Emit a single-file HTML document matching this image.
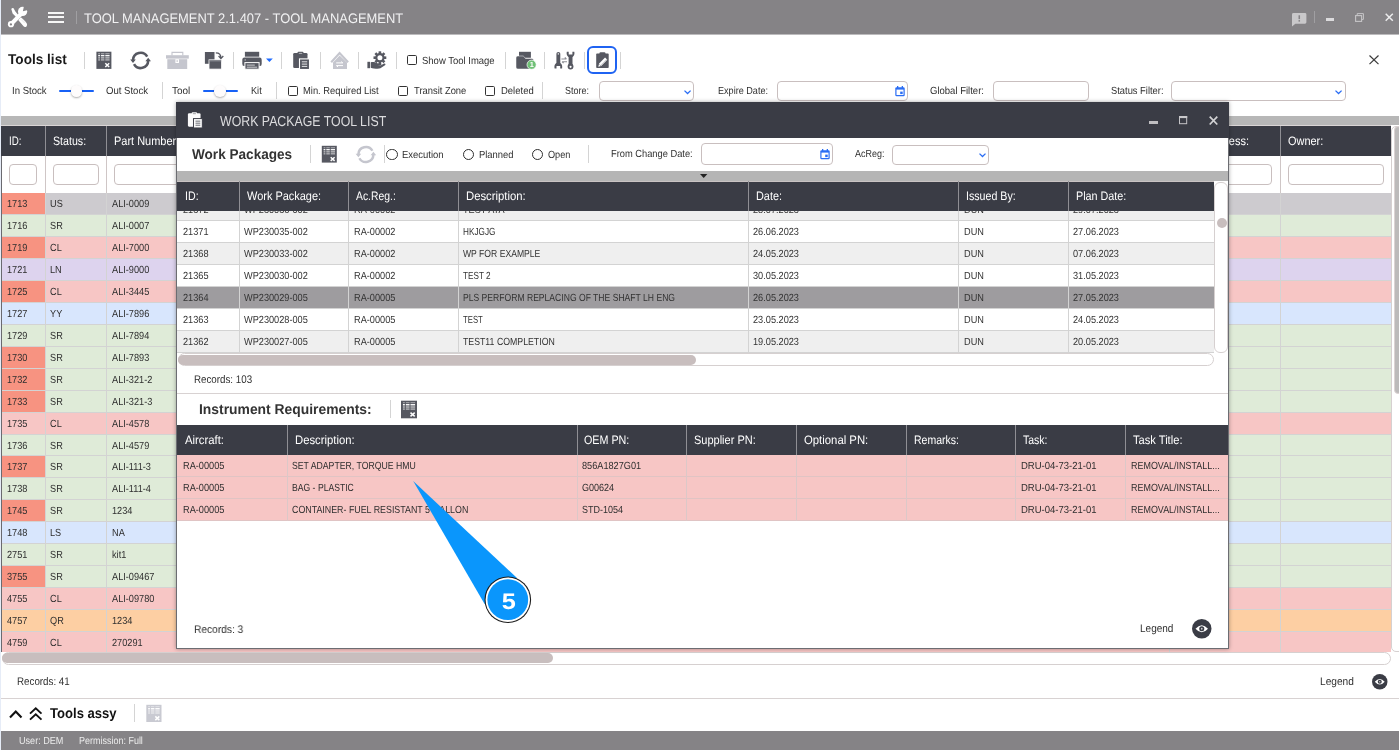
<!DOCTYPE html><html><head><meta charset="utf-8"><title>Tool Management</title><style>
*{box-sizing:border-box;margin:0;padding:0}
html,body{width:1399px;height:750px;overflow:hidden;background:#fff;font-family:"Liberation Sans",sans-serif;color:#222;text-rendering:geometricPrecision}
.a{position:absolute}
.t{position:absolute;white-space:nowrap;line-height:1;transform-origin:0 50%}
.b{font-weight:bold}
svg{position:absolute;overflow:visible}
</style></head><body><div id="app" style="position:absolute;left:0;top:0;width:1399px;height:750px;will-change:transform">
<div class="a" style="left:0px;top:0px;width:1399px;height:34px;background:#858386;"></div>
<div class="a" style="left:0px;top:34px;width:1399px;height:1px;background:#bcbbbd;"></div>
<div class="t" style="left:84.3px;top:12px;font-size:13.8px;color:#f1f1f2;transform:scaleX(0.937);">TOOL MANAGEMENT 2.1.407 - TOOL MANAGEMENT</div>
<div class="a" style="left:76px;top:11px;width:1px;height:12.6px;background:#a09fa2;"></div>
<div class="a" style="left:48px;top:12.1px;width:16.1px;height:2.1px;background:#f6f6f6;"></div>
<div class="a" style="left:48px;top:16.4px;width:16.1px;height:2.1px;background:#f6f6f6;"></div>
<div class="a" style="left:48px;top:20.8px;width:16.1px;height:2.1px;background:#f6f6f6;"></div>
<svg style="left:0;top:0" width="40" height="35" viewBox="0 0 40 35"><g fill="#fff" stroke="none"><path d="M11.3 8.9 Q12.2 7.4 13.6 8.2 L15.2 11.2 L18.6 15.6 L16.6 17.6 L12.6 13.6 Z"/><path d="M18.2 19.9 L20.9 17.2 L26.6 23 Q27.9 25.4 26.3 26.7 Q24.6 27.9 22.9 25.6 Z"/><path d="M9.6 22.8 L19.6 12.6 L22.4 15.4 L12.6 25.4 Z"/><circle cx="11" cy="24.2" r="3.1"/><circle cx="22.6" cy="11.4" r="4.6"/></g><circle cx="10.9" cy="24.4" r="1.15" fill="#858386"/><path d="M22.9 11.2 L24.2 5 L30 9.5 Z" fill="#858386"/><path d="M21.2 19.6l3.4 3.4M22.4 18.4l3.4 3.4" stroke="#cfcfd1" stroke-width=".5" fill="none"/></svg>
<svg style="left:1291.5px;top:12.9px" width="14.4" height="13.6" viewBox="0 0 15 14"><path d="M1.5 0h12a1.5 1.5 0 0 1 1.5 1.5v8a1.5 1.5 0 0 1-1.5 1.5H3.5L0 14V1.5A1.5 1.5 0 0 1 1.5 0z" fill="#c9c8ca"/><rect x="6.8" y="2.3" width="1.6" height="4" fill="#858386"/><rect x="6.8" y="7.3" width="1.6" height="1.6" fill="#858386"/></svg>
<div class="a" style="left:1314px;top:11px;width:1px;height:12.2px;background:#a09fa2;"></div>
<div class="a" style="left:1326px;top:18px;width:7.8px;height:3px;background:#dcdbdd;"></div>
<svg style="left:1355.4px;top:13.4px" width="9" height="9" viewBox="0 0 9 9"><path d="M2.2 2V.6H8.4V6.4H7" fill="none" stroke="#c6c5c7" stroke-width="1"/><rect x=".6" y="2.6" width="6" height="5.8" fill="none" stroke="#c6c5c7" stroke-width="1.1"/></svg>
<svg style="left:1385.4px;top:13.4px" width="8.5" height="8.5" viewBox="0 0 8.5 8.5"><path d="M.7 .7 L7.8 7.8 M7.8 .7 L.7 7.8" stroke="#ececed" stroke-width="1.5"/></svg>
<div class="t b" style="left:8.2px;top:53px;font-size:14.2px;color:#1a1a1a;transform:scaleX(0.960);">Tools list</div>
<div class="a" style="left:84px;top:51.8px;width:1px;height:17.7px;background:#d4d4d4;"></div>
<div class="a" style="left:233px;top:51.8px;width:1px;height:17.7px;background:#d4d4d4;"></div>
<div class="a" style="left:281px;top:51.8px;width:1px;height:17.7px;background:#d4d4d4;"></div>
<div class="a" style="left:320px;top:51.8px;width:1px;height:17.7px;background:#d4d4d4;"></div>
<div class="a" style="left:358px;top:51.8px;width:1px;height:17.7px;background:#d4d4d4;"></div>
<div class="a" style="left:396px;top:51.8px;width:1px;height:17.7px;background:#d4d4d4;"></div>
<div class="a" style="left:505px;top:51.8px;width:1px;height:17.7px;background:#d4d4d4;"></div>
<div class="a" style="left:544px;top:51.8px;width:1px;height:17.7px;background:#d4d4d4;"></div>
<div class="a" style="left:584px;top:51.8px;width:1px;height:17.7px;background:#d4d4d4;"></div>
<div class="a" style="left:620px;top:51.8px;width:1px;height:17.7px;background:#d4d4d4;"></div>
<div class="a" style="left:407px;top:55.2px;width:10px;height:10px;background:#fff;border:1.2px solid #333;border-radius:1.6px;"></div>
<div class="t" style="left:422.3px;top:57px;font-size:10.3px;color:#2f2f2f;transform:scaleX(0.922);">Show Tool Image</div>
<div class="a" style="left:587px;top:46.3px;width:29.8px;height:28.0px;background:#fff;border:2px solid #1f63f2;border-radius:6px;"></div>
<svg style="left:1369.3px;top:55px" width="10" height="9.6" viewBox="0 0 10 9.6"><path d="M.5 .5 L9.5 9.1 M9.5 .5 L.5 9.1" stroke="#3b3b3b" stroke-width="1.2"/></svg>
<div class="t" style="left:12.1px;top:87px;font-size:10.3px;color:#2f2f2f;transform:scaleX(0.932);">In Stock</div>
<div class="t" style="left:106.3px;top:87px;font-size:10.3px;color:#2f2f2f;transform:scaleX(0.929);">Out Stock</div>
<div class="t" style="left:172.4px;top:87px;font-size:10.3px;color:#2f2f2f;transform:scaleX(0.969);">Tool</div>
<div class="t" style="left:250.7px;top:87px;font-size:10.3px;color:#2f2f2f;transform:scaleX(0.890);">Kit</div>
<div class="t" style="left:303.4px;top:87px;font-size:10.3px;color:#2f2f2f;transform:scaleX(0.911);">Min. Required List</div>
<div class="t" style="left:413.7px;top:87px;font-size:10.3px;color:#2f2f2f;transform:scaleX(0.911);">Transit Zone</div>
<div class="t" style="left:500.5px;top:87px;font-size:10.3px;color:#2f2f2f;transform:scaleX(0.921);">Deleted</div>
<div class="t" style="left:565.4px;top:87px;font-size:10.3px;color:#2f2f2f;transform:scaleX(0.870);">Store:</div>
<div class="t" style="left:717.5px;top:87px;font-size:10.3px;color:#2f2f2f;transform:scaleX(0.882);">Expire Date:</div>
<div class="t" style="left:930.0px;top:87px;font-size:10.3px;color:#2f2f2f;transform:scaleX(0.925);">Global Filter:</div>
<div class="t" style="left:1111.0px;top:87px;font-size:10.3px;color:#2f2f2f;transform:scaleX(0.908);">Status Filter:</div>
<div class="a" style="left:162px;top:81.8px;width:1px;height:17.7px;background:#d4d4d4;"></div>
<div class="a" style="left:276px;top:81.8px;width:1px;height:17.7px;background:#d4d4d4;"></div>
<div class="a" style="left:542px;top:81.8px;width:1px;height:17.7px;background:#d4d4d4;"></div>
<div class="a" style="left:59.2px;top:89.8px;width:34.7px;height:2.2px;background:#1761f6;border-radius:1px;"></div>
<div class="a" style="left:70.60000000000001px;top:85.30000000000001px;width:11.6px;height:11.6px;background:#fefcfc;border-radius:50%;box-shadow:0 1px 2px rgba(0,0,0,.32);"></div>
<div class="a" style="left:203.2px;top:89.8px;width:34.6px;height:2.2px;background:#1761f6;border-radius:1px;"></div>
<div class="a" style="left:214.29999999999998px;top:85.30000000000001px;width:11.6px;height:11.6px;background:#fefcfc;border-radius:50%;box-shadow:0 1px 2px rgba(0,0,0,.32);"></div>
<div class="a" style="left:287.9px;top:86px;width:10px;height:10px;background:#fff;border:1.2px solid #333;border-radius:1.6px;"></div>
<div class="a" style="left:398px;top:86px;width:10px;height:10px;background:#fff;border:1.2px solid #333;border-radius:1.6px;"></div>
<div class="a" style="left:484.8px;top:86px;width:10px;height:10px;background:#fff;border:1.2px solid #333;border-radius:1.6px;"></div>
<div class="a" style="left:598.8px;top:81.3px;width:95.6px;height:19.5px;background:#fff;border:1px solid #c9bfbf;border-radius:4px;"></div>
<svg style="left:683.7px;top:89.62500000000001px" width="7.099999999999909" height="4.5499999999999545" viewBox="0 0 7.099999999999909 4.5499999999999545"><path d="M0.5 0.6 L3.5499999999999545 3.5499999999999545 L6.599999999999909 0.6" fill="none" stroke="#2a6df4" stroke-width="1.3"/></svg>
<div class="a" style="left:776.5px;top:81.3px;width:131.5px;height:19.5px;background:#fff;border:1px solid #c9bfbf;border-radius:4px;"></div>
<div class="a" style="left:992.5px;top:81.3px;width:96.5px;height:19.5px;background:#fff;border:1px solid #c9bfbf;border-radius:4px;"></div>
<div class="a" style="left:1170.5px;top:81.3px;width:175.1px;height:19.5px;background:#fff;border:1px solid #c9bfbf;border-radius:4px;"></div>
<svg style="left:1334.5px;top:89.62500000000001px" width="7.099999999999909" height="4.5499999999999545" viewBox="0 0 7.099999999999909 4.5499999999999545"><path d="M0.5 0.6 L3.5499999999999545 3.5499999999999545 L6.599999999999909 0.6" fill="none" stroke="#2a6df4" stroke-width="1.3"/></svg>
<svg style="left:895px;top:85.8px" width="10" height="10.5" viewBox="0 0 10 10.5"><rect x=".3" y="1.2" width="9.4" height="9" rx="1.3" fill="#2a6df4"/><rect x="1.5" y="3.6" width="7" height="5.4" fill="#fff"/><rect x="5.2" y="5.6" width="2.5" height="2.5" fill="#2a6df4"/><rect x="2" y="0" width="1.3" height="2" fill="#2a6df4"/><rect x="6.7" y="0" width="1.3" height="2" fill="#2a6df4"/></svg>
<div class="a" style="left:1px;top:116px;width:1398px;height:9px;background:#b7b7b7;"></div>
<div class="a" style="left:1px;top:125px;width:1398px;height:1px;background:#dad5d5;"></div>
<div class="a" style="left:1px;top:126px;width:1389.5px;height:29.8px;background:#3a3c45;"></div>
<div class="a" style="left:1px;top:155.8px;width:1390px;height:37px;background:#fff;"></div>
<div class="t" style="left:8.8px;top:135px;font-size:12.2px;color:#fff;transform:scaleX(0.802);">ID:</div>
<div class="t" style="left:52.8px;top:135px;font-size:12.2px;color:#fff;transform:scaleX(0.872);">Status:</div>
<div class="t" style="left:114.2px;top:135px;font-size:12.2px;color:#fff;transform:scaleX(0.900);">Part Number:</div>
<div class="t" style="left:1177.0px;top:135px;font-size:12.2px;color:#fff;transform:scaleX(0.900);">Store Address:</div>
<div class="t" style="left:1288.2px;top:135px;font-size:12.2px;color:#fff;transform:scaleX(0.898);">Owner:</div>
<div class="a" style="left:1px;top:193px;width:1390px;height:22px;background:#cdcbcf;border-bottom:1px solid #d3d3d3;"></div>
<div class="a" style="left:1px;top:193px;width:44px;height:21px;background:#f79381;"></div>
<div class="t" style="left:6.5px;top:200px;font-size:10.3px;color:#2f2f2f;transform:scaleX(0.892);">1713</div>
<div class="t" style="left:50.1px;top:200px;font-size:10.3px;color:#2f2f2f;transform:scaleX(0.892);">US</div>
<div class="t" style="left:111.5px;top:200px;font-size:10.3px;color:#2f2f2f;transform:scaleX(0.892);">ALI-0009</div>
<div class="a" style="left:1px;top:215px;width:1390px;height:22px;background:#dfebd8;border-bottom:1px solid #d3d3d3;"></div>
<div class="t" style="left:6.5px;top:222px;font-size:10.3px;color:#2f2f2f;transform:scaleX(0.892);">1716</div>
<div class="t" style="left:50.1px;top:222px;font-size:10.3px;color:#2f2f2f;transform:scaleX(0.892);">SR</div>
<div class="t" style="left:111.5px;top:222px;font-size:10.3px;color:#2f2f2f;transform:scaleX(0.892);">ALI-0007</div>
<div class="a" style="left:1px;top:237px;width:1390px;height:22px;background:#f7c6c5;border-bottom:1px solid #d3d3d3;"></div>
<div class="a" style="left:1px;top:237px;width:44px;height:21px;background:#f79381;"></div>
<div class="t" style="left:6.5px;top:244px;font-size:10.3px;color:#2f2f2f;transform:scaleX(0.892);">1719</div>
<div class="t" style="left:50.1px;top:244px;font-size:10.3px;color:#2f2f2f;transform:scaleX(0.892);">CL</div>
<div class="t" style="left:111.5px;top:244px;font-size:10.3px;color:#2f2f2f;transform:scaleX(0.892);">ALI-7000</div>
<div class="a" style="left:1px;top:259px;width:1390px;height:22px;background:#ddd3ee;border-bottom:1px solid #d3d3d3;"></div>
<div class="t" style="left:6.5px;top:266px;font-size:10.3px;color:#2f2f2f;transform:scaleX(0.892);">1721</div>
<div class="t" style="left:50.1px;top:266px;font-size:10.3px;color:#2f2f2f;transform:scaleX(0.892);">LN</div>
<div class="t" style="left:111.5px;top:266px;font-size:10.3px;color:#2f2f2f;transform:scaleX(0.892);">ALI-9000</div>
<div class="a" style="left:1px;top:281px;width:1390px;height:22px;background:#f7c6c5;border-bottom:1px solid #d3d3d3;"></div>
<div class="a" style="left:1px;top:281px;width:44px;height:21px;background:#f79381;"></div>
<div class="t" style="left:6.5px;top:288px;font-size:10.3px;color:#2f2f2f;transform:scaleX(0.892);">1725</div>
<div class="t" style="left:50.1px;top:288px;font-size:10.3px;color:#2f2f2f;transform:scaleX(0.892);">CL</div>
<div class="t" style="left:111.5px;top:288px;font-size:10.3px;color:#2f2f2f;transform:scaleX(0.892);">ALI-3445</div>
<div class="a" style="left:1px;top:303px;width:1390px;height:22px;background:#d8e6fd;border-bottom:1px solid #d3d3d3;"></div>
<div class="t" style="left:6.5px;top:310px;font-size:10.3px;color:#2f2f2f;transform:scaleX(0.892);">1727</div>
<div class="t" style="left:50.1px;top:310px;font-size:10.3px;color:#2f2f2f;transform:scaleX(0.892);">YY</div>
<div class="t" style="left:111.5px;top:310px;font-size:10.3px;color:#2f2f2f;transform:scaleX(0.892);">ALI-7896</div>
<div class="a" style="left:1px;top:325px;width:1390px;height:22px;background:#dfebd8;border-bottom:1px solid #d3d3d3;"></div>
<div class="t" style="left:6.5px;top:332px;font-size:10.3px;color:#2f2f2f;transform:scaleX(0.892);">1729</div>
<div class="t" style="left:50.1px;top:332px;font-size:10.3px;color:#2f2f2f;transform:scaleX(0.892);">SR</div>
<div class="t" style="left:111.5px;top:332px;font-size:10.3px;color:#2f2f2f;transform:scaleX(0.892);">ALI-7894</div>
<div class="a" style="left:1px;top:347px;width:1390px;height:22px;background:#dfebd8;border-bottom:1px solid #d3d3d3;"></div>
<div class="a" style="left:1px;top:347px;width:44px;height:21px;background:#f79381;"></div>
<div class="t" style="left:6.5px;top:354px;font-size:10.3px;color:#2f2f2f;transform:scaleX(0.892);">1730</div>
<div class="t" style="left:50.1px;top:354px;font-size:10.3px;color:#2f2f2f;transform:scaleX(0.892);">SR</div>
<div class="t" style="left:111.5px;top:354px;font-size:10.3px;color:#2f2f2f;transform:scaleX(0.892);">ALI-7893</div>
<div class="a" style="left:1px;top:369px;width:1390px;height:22px;background:#dfebd8;border-bottom:1px solid #d3d3d3;"></div>
<div class="a" style="left:1px;top:369px;width:44px;height:21px;background:#f79381;"></div>
<div class="t" style="left:6.5px;top:376px;font-size:10.3px;color:#2f2f2f;transform:scaleX(0.892);">1732</div>
<div class="t" style="left:50.1px;top:376px;font-size:10.3px;color:#2f2f2f;transform:scaleX(0.892);">SR</div>
<div class="t" style="left:111.5px;top:376px;font-size:10.3px;color:#2f2f2f;transform:scaleX(0.892);">ALI-321-2</div>
<div class="a" style="left:1px;top:391px;width:1390px;height:22px;background:#dfebd8;border-bottom:1px solid #d3d3d3;"></div>
<div class="a" style="left:1px;top:391px;width:44px;height:21px;background:#f79381;"></div>
<div class="t" style="left:6.5px;top:398px;font-size:10.3px;color:#2f2f2f;transform:scaleX(0.892);">1733</div>
<div class="t" style="left:50.1px;top:398px;font-size:10.3px;color:#2f2f2f;transform:scaleX(0.892);">SR</div>
<div class="t" style="left:111.5px;top:398px;font-size:10.3px;color:#2f2f2f;transform:scaleX(0.892);">ALI-321-3</div>
<div class="a" style="left:1px;top:413px;width:1390px;height:22px;background:#f7c6c5;border-bottom:1px solid #d3d3d3;"></div>
<div class="t" style="left:6.5px;top:420px;font-size:10.3px;color:#2f2f2f;transform:scaleX(0.892);">1735</div>
<div class="t" style="left:50.1px;top:420px;font-size:10.3px;color:#2f2f2f;transform:scaleX(0.892);">CL</div>
<div class="t" style="left:111.5px;top:420px;font-size:10.3px;color:#2f2f2f;transform:scaleX(0.892);">ALI-4578</div>
<div class="a" style="left:1px;top:435px;width:1390px;height:21px;background:#dfebd8;border-bottom:1px solid #d3d3d3;"></div>
<div class="t" style="left:6.5px;top:442px;font-size:10.3px;color:#2f2f2f;transform:scaleX(0.892);">1736</div>
<div class="t" style="left:50.1px;top:442px;font-size:10.3px;color:#2f2f2f;transform:scaleX(0.892);">SR</div>
<div class="t" style="left:111.5px;top:442px;font-size:10.3px;color:#2f2f2f;transform:scaleX(0.892);">ALI-4579</div>
<div class="a" style="left:1px;top:456px;width:1390px;height:22px;background:#dfebd8;border-bottom:1px solid #d3d3d3;"></div>
<div class="a" style="left:1px;top:456px;width:44px;height:21px;background:#f79381;"></div>
<div class="t" style="left:6.5px;top:463px;font-size:10.3px;color:#2f2f2f;transform:scaleX(0.892);">1737</div>
<div class="t" style="left:50.1px;top:463px;font-size:10.3px;color:#2f2f2f;transform:scaleX(0.892);">SR</div>
<div class="t" style="left:111.5px;top:463px;font-size:10.3px;color:#2f2f2f;transform:scaleX(0.892);">ALI-111-3</div>
<div class="a" style="left:1px;top:478px;width:1390px;height:22px;background:#dfebd8;border-bottom:1px solid #d3d3d3;"></div>
<div class="t" style="left:6.5px;top:485px;font-size:10.3px;color:#2f2f2f;transform:scaleX(0.892);">1738</div>
<div class="t" style="left:50.1px;top:485px;font-size:10.3px;color:#2f2f2f;transform:scaleX(0.892);">SR</div>
<div class="t" style="left:111.5px;top:485px;font-size:10.3px;color:#2f2f2f;transform:scaleX(0.892);">ALI-111-4</div>
<div class="a" style="left:1px;top:500px;width:1390px;height:22px;background:#dfebd8;border-bottom:1px solid #d3d3d3;"></div>
<div class="a" style="left:1px;top:500px;width:44px;height:21px;background:#f79381;"></div>
<div class="t" style="left:6.5px;top:507px;font-size:10.3px;color:#2f2f2f;transform:scaleX(0.892);">1745</div>
<div class="t" style="left:50.1px;top:507px;font-size:10.3px;color:#2f2f2f;transform:scaleX(0.892);">SR</div>
<div class="t" style="left:111.5px;top:507px;font-size:10.3px;color:#2f2f2f;transform:scaleX(0.892);">1234</div>
<div class="a" style="left:1px;top:522px;width:1390px;height:22px;background:#d8e6fd;border-bottom:1px solid #d3d3d3;"></div>
<div class="t" style="left:6.5px;top:529px;font-size:10.3px;color:#2f2f2f;transform:scaleX(0.892);">1748</div>
<div class="t" style="left:50.1px;top:529px;font-size:10.3px;color:#2f2f2f;transform:scaleX(0.892);">LS</div>
<div class="t" style="left:111.5px;top:529px;font-size:10.3px;color:#2f2f2f;transform:scaleX(0.892);">NA</div>
<div class="a" style="left:1px;top:544px;width:1390px;height:22px;background:#dfebd8;border-bottom:1px solid #d3d3d3;"></div>
<div class="t" style="left:6.5px;top:551px;font-size:10.3px;color:#2f2f2f;transform:scaleX(0.892);">2751</div>
<div class="t" style="left:50.1px;top:551px;font-size:10.3px;color:#2f2f2f;transform:scaleX(0.892);">SR</div>
<div class="t" style="left:111.5px;top:551px;font-size:10.3px;color:#2f2f2f;transform:scaleX(0.892);">kit1</div>
<div class="a" style="left:1px;top:566px;width:1390px;height:22px;background:#dfebd8;border-bottom:1px solid #d3d3d3;"></div>
<div class="a" style="left:1px;top:566px;width:44px;height:21px;background:#f79381;"></div>
<div class="t" style="left:6.5px;top:573px;font-size:10.3px;color:#2f2f2f;transform:scaleX(0.892);">3755</div>
<div class="t" style="left:50.1px;top:573px;font-size:10.3px;color:#2f2f2f;transform:scaleX(0.892);">SR</div>
<div class="t" style="left:111.5px;top:573px;font-size:10.3px;color:#2f2f2f;transform:scaleX(0.892);">ALI-09467</div>
<div class="a" style="left:1px;top:588px;width:1390px;height:22px;background:#f7c6c5;border-bottom:1px solid #d3d3d3;"></div>
<div class="t" style="left:6.5px;top:595px;font-size:10.3px;color:#2f2f2f;transform:scaleX(0.892);">4755</div>
<div class="t" style="left:50.1px;top:595px;font-size:10.3px;color:#2f2f2f;transform:scaleX(0.892);">CL</div>
<div class="t" style="left:111.5px;top:595px;font-size:10.3px;color:#2f2f2f;transform:scaleX(0.892);">ALI-09780</div>
<div class="a" style="left:1px;top:610px;width:1390px;height:22px;background:#fdcfa3;border-bottom:1px solid #d3d3d3;"></div>
<div class="t" style="left:6.5px;top:617px;font-size:10.3px;color:#2f2f2f;transform:scaleX(0.892);">4757</div>
<div class="t" style="left:50.1px;top:617px;font-size:10.3px;color:#2f2f2f;transform:scaleX(0.892);">QR</div>
<div class="t" style="left:111.5px;top:617px;font-size:10.3px;color:#2f2f2f;transform:scaleX(0.892);">1234</div>
<div class="a" style="left:1px;top:632px;width:1390px;height:22px;background:#f7c6c5;border-bottom:1px solid #d3d3d3;"></div>
<div class="t" style="left:6.5px;top:639px;font-size:10.3px;color:#2f2f2f;transform:scaleX(0.892);">4759</div>
<div class="t" style="left:50.1px;top:639px;font-size:10.3px;color:#2f2f2f;transform:scaleX(0.892);">CL</div>
<div class="t" style="left:111.5px;top:639px;font-size:10.3px;color:#2f2f2f;transform:scaleX(0.892);">270291</div>
<div class="a" style="left:45px;top:125.6px;width:1px;height:30px;background:#8f8f94;"></div>
<div class="a" style="left:45px;top:155.8px;width:1px;height:37px;background:#cfc6c6;"></div>
<div class="a" style="left:45px;top:193px;width:1px;height:459px;background:#d3d3d3;"></div>
<div class="a" style="left:106px;top:125.6px;width:1px;height:30px;background:#8f8f94;"></div>
<div class="a" style="left:106px;top:155.8px;width:1px;height:37px;background:#cfc6c6;"></div>
<div class="a" style="left:106px;top:193px;width:1px;height:459px;background:#d3d3d3;"></div>
<div class="a" style="left:1169px;top:125.6px;width:1px;height:30px;background:#8f8f94;"></div>
<div class="a" style="left:1169px;top:155.8px;width:1px;height:37px;background:#cfc6c6;"></div>
<div class="a" style="left:1169px;top:193px;width:1px;height:459px;background:#d3d3d3;"></div>
<div class="a" style="left:1280px;top:125.6px;width:1px;height:30px;background:#8f8f94;"></div>
<div class="a" style="left:1280px;top:155.8px;width:1px;height:37px;background:#cfc6c6;"></div>
<div class="a" style="left:1280px;top:193px;width:1px;height:459px;background:#d3d3d3;"></div>
<div class="a" style="left:8.8px;top:164px;width:28.5px;height:20.8px;background:#fff;border:1px solid #c9bfbf;border-radius:4px;"></div>
<div class="a" style="left:52.8px;top:164px;width:45.9px;height:20.8px;background:#fff;border:1px solid #c9bfbf;border-radius:4px;"></div>
<div class="a" style="left:114.2px;top:164px;width:185.8px;height:20.8px;background:#fff;border:1px solid #c9bfbf;border-radius:4px;"></div>
<div class="a" style="left:1177px;top:164px;width:95.4px;height:20.8px;background:#fff;border:1px solid #c9bfbf;border-radius:4px;"></div>
<div class="a" style="left:1288.2px;top:164px;width:95.8px;height:20.8px;background:#fff;border:1px solid #c9bfbf;border-radius:4px;"></div>
<div class="a" style="left:1391px;top:125px;width:8px;height:527px;background:#fff;"></div>
<div class="a" style="left:1391.3px;top:125.5px;width:13.7px;height:526.0px;background:#fff;border:1px solid #d6d0d0;border-radius:5px;"></div>
<div class="a" style="left:1393.5px;top:126px;width:8px;height:267.5px;background:#bcbaba;border-radius:4px;border:1px solid #dcd3d3;"></div>
<div class="a" style="left:1px;top:651.5px;width:1398px;height:99px;background:#fff;"></div>
<div class="a" style="left:1.5px;top:651.8px;width:1389.2px;height:12.8px;background:#fff;border:1px solid #d6d0d0;border-radius:7px;"></div>
<div class="a" style="left:2px;top:653.3px;width:551px;height:10.1px;background:#c8bebe;border-radius:5px;"></div>
<div class="t" style="left:17.2px;top:677px;font-size:11px;color:#2f2f2f;transform:scaleX(0.889);">Records: 41</div>
<div class="t" style="left:1319.5px;top:677px;font-size:11px;color:#2f2f2f;transform:scaleX(0.924);">Legend</div>
<svg style="left:1371.65px;top:673.85px" width="15.5" height="15.5" viewBox="0 0 20 20"><circle cx="10" cy="10" r="10" fill="#3a3c45"/><path d="M3.6 10 Q10 2.6 16.4 10 Q10 17.4 3.6 10Z" fill="#fff"/><circle cx="10" cy="10" r="2.6" fill="#3a3c45"/><circle cx="10" cy="10" r="0.9" fill="#c9c9cc"/></svg>
<div class="a" style="left:1px;top:698px;width:1398px;height:1px;background:#d8d2d2;"></div>
<svg style="left:8.6px;top:710px" width="13.5" height="9" viewBox="0 0 13.5 9"><path d="M1 7.6 L6.75 1.6 L12.5 7.6" fill="none" stroke="#111" stroke-width="2.1"/></svg>
<svg style="left:29px;top:706.5px" width="13.5" height="14" viewBox="0 0 13.5 14"><path d="M1 6.6 L6.75 1.4 L12.5 6.6 M1 12.6 L6.75 7.4 L12.5 12.6" fill="none" stroke="#111" stroke-width="1.9"/></svg>
<div class="t b" style="left:50.2px;top:707px;font-size:14.2px;color:#111;transform:scaleX(0.922);">Tools assy</div>
<div class="a" style="left:134px;top:704px;width:1px;height:17.5px;background:#d4d4d4;"></div>
<div class="a" style="left:0px;top:731px;width:1399px;height:19px;background:#858386;"></div>
<div class="t" style="left:18.9px;top:737px;font-size:10.3px;color:#ececec;transform:scaleX(0.882);">User: DEM</div>
<div class="t" style="left:78.5px;top:737px;font-size:10.3px;color:#ececec;transform:scaleX(0.872);">Permission: Full</div>
<div class="a" style="left:0px;top:0px;width:1px;height:750px;background:#e6ecf7;"></div>
<div class="a" style="left:1px;top:156px;width:1px;height:496px;background:#6a6a70;"></div>
<div class="a" style="left:176px;top:102px;width:1053px;height:547px;background:#fff;border:1px solid #6c6d72;box-shadow:0 0 4px rgba(0,0,0,.35);"></div>
<div class="a" style="left:176px;top:102px;width:1053px;height:36px;background:#3a3c45;"></div>
<div class="t" style="left:219.7px;top:115px;font-size:14.5px;color:#dcdcde;transform:scaleX(0.851);">WORK PACKAGE TOOL LIST</div>
<div class="a" style="left:1149px;top:121px;width:8.5px;height:3px;background:#bfbec1;"></div>
<svg style="left:1179px;top:116px" width="8.2" height="8.2" viewBox="0 0 8.2 8.2"><rect x=".5" y=".5" width="7.2" height="7.2" fill="none" stroke="#c4c3c6" stroke-width="1"/><rect x="0" y="0" width="8.2" height="2.1" fill="#c9c8cb"/></svg>
<svg style="left:1209px;top:115.8px" width="9" height="9.2" viewBox="0 0 9 9.2"><path d="M.7 .7 L8.3 8.5 M8.3 .7 L.7 8.5" stroke="#d2d2d4" stroke-width="1.7"/></svg>
<div class="t b" style="left:191.8px;top:148px;font-size:14.2px;color:#333;transform:scaleX(0.957);">Work Packages</div>
<div class="a" style="left:310px;top:145.4px;width:1px;height:17.3px;background:#d4d4d4;"></div>
<div class="a" style="left:384px;top:145.4px;width:1px;height:17.3px;background:#d4d4d4;"></div>
<div class="a" style="left:588px;top:145px;width:1px;height:18px;background:#d4d4d4;"></div>
<div class="a" style="left:386.4px;top:148.6px;width:11.6px;height:11.6px;background:#fff;border:1.5px solid #2e2e2e;border-radius:50%;"></div>
<div class="t" style="left:402.0px;top:151px;font-size:10.3px;color:#2f2f2f;transform:scaleX(0.920);">Execution</div>
<div class="a" style="left:462.59999999999997px;top:148.6px;width:11.6px;height:11.6px;background:#fff;border:1.5px solid #2e2e2e;border-radius:50%;"></div>
<div class="t" style="left:478.5px;top:151px;font-size:10.3px;color:#2f2f2f;transform:scaleX(0.913);">Planned</div>
<div class="a" style="left:531.5px;top:148.6px;width:11.6px;height:11.6px;background:#fff;border:1.5px solid #2e2e2e;border-radius:50%;"></div>
<div class="t" style="left:547.6px;top:151px;font-size:10.3px;color:#2f2f2f;transform:scaleX(0.889);">Open</div>
<div class="t" style="left:611.0px;top:150px;font-size:10.3px;color:#2f2f2f;transform:scaleX(0.903);">From Change Date:</div>
<div class="a" style="left:701px;top:143.3px;width:131.7px;height:21.7px;background:#fff;border:1px solid #c9bfbf;border-radius:4px;"></div>
<svg style="left:819.5px;top:149.2px" width="10" height="10.5" viewBox="0 0 10 10.5"><rect x=".3" y="1.2" width="9.4" height="9" rx="1.3" fill="#2a6df4"/><rect x="1.5" y="3.6" width="7" height="5.4" fill="#fff"/><rect x="5.2" y="5.6" width="2.5" height="2.5" fill="#2a6df4"/><rect x="2" y="0" width="1.3" height="2" fill="#2a6df4"/><rect x="6.7" y="0" width="1.3" height="2" fill="#2a6df4"/></svg>
<div class="t" style="left:854.6px;top:150px;font-size:10.3px;color:#2f2f2f;transform:scaleX(0.870);">AcReg:</div>
<div class="a" style="left:892.2px;top:145.2px;width:96.5px;height:19.4px;background:#fff;border:1px solid #c9bfbf;border-radius:4px;"></div>
<svg style="left:978.5px;top:153.35000000000002px" width="7.0" height="4.5" viewBox="0 0 7.0 4.5"><path d="M0.5 0.6 L3.5 3.5 L6.5 0.6" fill="none" stroke="#2a6df4" stroke-width="1.3"/></svg>
<div class="a" style="left:177px;top:171px;width:1051px;height:10px;background:#b5b5b5;"></div>
<svg style="left:699.5px;top:174.2px" width="7.4" height="4" viewBox="0 0 7.4 4"><path d="M0 0H7.4L3.7 4Z" fill="#222"/></svg>
<div class="a" style="left:177px;top:181px;width:1037px;height:30px;background:#3a3c45;"></div>
<div class="a" style="left:177px;top:181px;width:1037px;height:1px;background:#c9c3c3;"></div>
<div class="t" style="left:185.0px;top:190px;font-size:12.2px;color:#fff;transform:scaleX(0.872);">ID:</div>
<div class="t" style="left:246.8px;top:190px;font-size:12.2px;color:#fff;transform:scaleX(0.899);">Work Package:</div>
<div class="t" style="left:356.2px;top:190px;font-size:12.2px;color:#fff;transform:scaleX(0.851);">Ac.Reg.:</div>
<div class="t" style="left:466.2px;top:190px;font-size:12.2px;color:#fff;transform:scaleX(0.928);">Description:</div>
<div class="t" style="left:755.6px;top:190px;font-size:12.2px;color:#fff;transform:scaleX(0.892);">Date:</div>
<div class="t" style="left:965.7px;top:190px;font-size:12.2px;color:#fff;transform:scaleX(0.873);">Issued By:</div>
<div class="t" style="left:1075.8px;top:190px;font-size:12.2px;color:#fff;transform:scaleX(0.885);">Plan Date:</div>
<div class="a" style="left:0;top:0;width:1399px;height:750px;clip-path:inset(211px 185px 397px 177px)">
<div class="a" style="left:177px;top:199px;width:1037px;height:22px;background:#efefef;border-bottom:1px solid #d3d3d3;"></div>
<div class="t" style="left:182.5px;top:206px;font-size:10.3px;color:#333;transform:scaleX(0.892);">21372</div>
<div class="t" style="left:244.2px;top:206px;font-size:10.3px;color:#333;transform:scaleX(0.892);">WP230036-002</div>
<div class="t" style="left:354.0px;top:206px;font-size:10.3px;color:#333;transform:scaleX(0.892);">RA-00002</div>
<div class="t" style="left:463.4px;top:206px;font-size:10.3px;color:#333;transform:scaleX(0.886);">TEST ATA</div>
<div class="t" style="left:753.1px;top:206px;font-size:10.3px;color:#333;transform:scaleX(0.892);">28.07.2023</div>
<div class="t" style="left:963.5px;top:206px;font-size:10.3px;color:#333;transform:scaleX(0.892);">DUN</div>
<div class="t" style="left:1073.3px;top:206px;font-size:10.3px;color:#333;transform:scaleX(0.892);">29.07.2023</div>
<div class="a" style="left:177px;top:221px;width:1037px;height:22px;background:#fff;border-bottom:1px solid #d3d3d3;"></div>
<div class="t" style="left:182.5px;top:228px;font-size:10.3px;color:#333;transform:scaleX(0.892);">21371</div>
<div class="t" style="left:244.2px;top:228px;font-size:10.3px;color:#333;transform:scaleX(0.892);">WP230035-002</div>
<div class="t" style="left:354.0px;top:228px;font-size:10.3px;color:#333;transform:scaleX(0.892);">RA-00002</div>
<div class="t" style="left:463.4px;top:228px;font-size:10.3px;color:#333;transform:scaleX(0.797);">HKJGJG</div>
<div class="t" style="left:753.1px;top:228px;font-size:10.3px;color:#333;transform:scaleX(0.892);">26.06.2023</div>
<div class="t" style="left:963.5px;top:228px;font-size:10.3px;color:#333;transform:scaleX(0.892);">DUN</div>
<div class="t" style="left:1073.3px;top:228px;font-size:10.3px;color:#333;transform:scaleX(0.892);">27.06.2023</div>
<div class="a" style="left:177px;top:243px;width:1037px;height:22px;background:#efefef;border-bottom:1px solid #d3d3d3;"></div>
<div class="t" style="left:182.5px;top:250px;font-size:10.3px;color:#333;transform:scaleX(0.892);">21368</div>
<div class="t" style="left:244.2px;top:250px;font-size:10.3px;color:#333;transform:scaleX(0.892);">WP230033-002</div>
<div class="t" style="left:354.0px;top:250px;font-size:10.3px;color:#333;transform:scaleX(0.892);">RA-00002</div>
<div class="t" style="left:463.4px;top:250px;font-size:10.3px;color:#333;transform:scaleX(0.836);">WP FOR EXAMPLE</div>
<div class="t" style="left:753.1px;top:250px;font-size:10.3px;color:#333;transform:scaleX(0.892);">24.05.2023</div>
<div class="t" style="left:963.5px;top:250px;font-size:10.3px;color:#333;transform:scaleX(0.892);">DUN</div>
<div class="t" style="left:1073.3px;top:250px;font-size:10.3px;color:#333;transform:scaleX(0.892);">07.06.2023</div>
<div class="a" style="left:177px;top:265px;width:1037px;height:22px;background:#fff;border-bottom:1px solid #d3d3d3;"></div>
<div class="t" style="left:182.5px;top:272px;font-size:10.3px;color:#333;transform:scaleX(0.892);">21365</div>
<div class="t" style="left:244.2px;top:272px;font-size:10.3px;color:#333;transform:scaleX(0.892);">WP230030-002</div>
<div class="t" style="left:354.0px;top:272px;font-size:10.3px;color:#333;transform:scaleX(0.892);">RA-00002</div>
<div class="t" style="left:463.4px;top:272px;font-size:10.3px;color:#333;transform:scaleX(0.795);">TEST 2</div>
<div class="t" style="left:753.1px;top:272px;font-size:10.3px;color:#333;transform:scaleX(0.892);">30.05.2023</div>
<div class="t" style="left:963.5px;top:272px;font-size:10.3px;color:#333;transform:scaleX(0.892);">DUN</div>
<div class="t" style="left:1073.3px;top:272px;font-size:10.3px;color:#333;transform:scaleX(0.892);">31.05.2023</div>
<div class="a" style="left:177px;top:287px;width:1037px;height:22px;background:#9e9c9f;border-bottom:1px solid #d3d3d3;"></div>
<div class="t" style="left:182.5px;top:294px;font-size:10.3px;color:#333;transform:scaleX(0.892);">21364</div>
<div class="t" style="left:244.2px;top:294px;font-size:10.3px;color:#333;transform:scaleX(0.892);">WP230029-005</div>
<div class="t" style="left:354.0px;top:294px;font-size:10.3px;color:#333;transform:scaleX(0.892);">RA-00005</div>
<div class="t" style="left:463.4px;top:294px;font-size:10.3px;color:#333;transform:scaleX(0.834);">PLS PERFORM REPLACING OF THE SHAFT LH ENG</div>
<div class="t" style="left:753.1px;top:294px;font-size:10.3px;color:#333;transform:scaleX(0.892);">26.05.2023</div>
<div class="t" style="left:963.5px;top:294px;font-size:10.3px;color:#333;transform:scaleX(0.892);">DUN</div>
<div class="t" style="left:1073.3px;top:294px;font-size:10.3px;color:#333;transform:scaleX(0.892);">27.05.2023</div>
<div class="a" style="left:177px;top:309px;width:1037px;height:22px;background:#fff;border-bottom:1px solid #d3d3d3;"></div>
<div class="t" style="left:182.5px;top:316px;font-size:10.3px;color:#333;transform:scaleX(0.892);">21363</div>
<div class="t" style="left:244.2px;top:316px;font-size:10.3px;color:#333;transform:scaleX(0.892);">WP230028-005</div>
<div class="t" style="left:354.0px;top:316px;font-size:10.3px;color:#333;transform:scaleX(0.892);">RA-00005</div>
<div class="t" style="left:463.4px;top:316px;font-size:10.3px;color:#333;transform:scaleX(0.752);">TEST</div>
<div class="t" style="left:753.1px;top:316px;font-size:10.3px;color:#333;transform:scaleX(0.892);">23.05.2023</div>
<div class="t" style="left:963.5px;top:316px;font-size:10.3px;color:#333;transform:scaleX(0.892);">DUN</div>
<div class="t" style="left:1073.3px;top:316px;font-size:10.3px;color:#333;transform:scaleX(0.892);">24.05.2023</div>
<div class="a" style="left:177px;top:331px;width:1037px;height:22px;background:#efefef;border-bottom:1px solid #d3d3d3;"></div>
<div class="t" style="left:182.5px;top:338px;font-size:10.3px;color:#333;transform:scaleX(0.892);">21362</div>
<div class="t" style="left:244.2px;top:338px;font-size:10.3px;color:#333;transform:scaleX(0.892);">WP230027-005</div>
<div class="t" style="left:354.0px;top:338px;font-size:10.3px;color:#333;transform:scaleX(0.892);">RA-00005</div>
<div class="t" style="left:463.4px;top:338px;font-size:10.3px;color:#333;transform:scaleX(0.850);">TEST11 COMPLETION</div>
<div class="t" style="left:753.1px;top:338px;font-size:10.3px;color:#333;transform:scaleX(0.892);">19.05.2023</div>
<div class="t" style="left:963.5px;top:338px;font-size:10.3px;color:#333;transform:scaleX(0.892);">DUN</div>
<div class="t" style="left:1073.3px;top:338px;font-size:10.3px;color:#333;transform:scaleX(0.892);">20.05.2023</div>
</div>
<div class="a" style="left:239px;top:181px;width:1px;height:30px;background:#8f8f94;"></div>
<div class="a" style="left:239px;top:211px;width:1px;height:141.5px;background:#d3d3d3;"></div>
<div class="a" style="left:348px;top:181px;width:1px;height:30px;background:#8f8f94;"></div>
<div class="a" style="left:348px;top:211px;width:1px;height:141.5px;background:#d3d3d3;"></div>
<div class="a" style="left:458px;top:181px;width:1px;height:30px;background:#8f8f94;"></div>
<div class="a" style="left:458px;top:211px;width:1px;height:141.5px;background:#d3d3d3;"></div>
<div class="a" style="left:748px;top:181px;width:1px;height:30px;background:#8f8f94;"></div>
<div class="a" style="left:748px;top:211px;width:1px;height:141.5px;background:#d3d3d3;"></div>
<div class="a" style="left:958px;top:181px;width:1px;height:30px;background:#8f8f94;"></div>
<div class="a" style="left:958px;top:211px;width:1px;height:141.5px;background:#d3d3d3;"></div>
<div class="a" style="left:1068px;top:181px;width:1px;height:30px;background:#8f8f94;"></div>
<div class="a" style="left:1068px;top:211px;width:1px;height:141.5px;background:#d3d3d3;"></div>
<div class="a" style="left:1214.3px;top:181.5px;width:13.3px;height:171.0px;background:#fff;border:1px solid #d6d0d0;border-radius:6px;"></div>
<div class="a" style="left:1216.6px;top:217.8px;width:10.2px;height:10.2px;background:#c8bebe;border-radius:50%;"></div>
<div class="a" style="left:177.5px;top:352.8px;width:1036.5px;height:13.7px;background:#fff;border:1px solid #d6d0d0;border-radius:7px;"></div>
<div class="a" style="left:178px;top:355px;width:518px;height:9.7px;background:#c8bebe;border-radius:5px;"></div>
<div class="t" style="left:193.9px;top:375px;font-size:11px;color:#2f2f2f;transform:scaleX(0.888);">Records: 103</div>
<div class="a" style="left:177px;top:393px;width:1051px;height:1px;background:#d8d2d2;"></div>
<div class="t b" style="left:198.8px;top:403px;font-size:14.2px;color:#333;transform:scaleX(0.978);">Instrument Requirements:</div>
<div class="a" style="left:390px;top:400px;width:1px;height:18px;background:#d4d4d4;"></div>
<div class="a" style="left:177px;top:425.3px;width:1051px;height:29.9px;background:#3a3c45;"></div>
<div class="t" style="left:185.0px;top:434px;font-size:12.2px;color:#fff;transform:scaleX(0.928);">Aircraft:</div>
<div class="t" style="left:295.0px;top:434px;font-size:12.2px;color:#fff;transform:scaleX(0.927);">Description:</div>
<div class="t" style="left:584.3px;top:434px;font-size:12.2px;color:#fff;transform:scaleX(0.881);">OEM PN:</div>
<div class="t" style="left:694.0px;top:434px;font-size:12.2px;color:#fff;transform:scaleX(0.902);">Supplier PN:</div>
<div class="t" style="left:803.7px;top:434px;font-size:12.2px;color:#fff;transform:scaleX(0.930);">Optional PN:</div>
<div class="t" style="left:913.5px;top:434px;font-size:12.2px;color:#fff;transform:scaleX(0.862);">Remarks:</div>
<div class="t" style="left:1023.3px;top:434px;font-size:12.2px;color:#fff;transform:scaleX(0.860);">Task:</div>
<div class="t" style="left:1132.8px;top:434px;font-size:12.2px;color:#fff;transform:scaleX(0.913);">Task Title:</div>
<div class="a" style="left:177px;top:455px;width:1051px;height:22px;background:#f7c6c5;border-bottom:1px solid #e0c4c4;"></div>
<div class="t" style="left:182.6px;top:462px;font-size:10.3px;color:#2f2f2f;transform:scaleX(0.893);">RA-00005</div>
<div class="t" style="left:292.4px;top:462px;font-size:10.3px;color:#2f2f2f;transform:scaleX(0.845);">SET ADAPTER, TORQUE HMU</div>
<div class="t" style="left:581.8px;top:462px;font-size:10.3px;color:#2f2f2f;transform:scaleX(0.890);">856A1827G01</div>
<div class="t" style="left:1020.8px;top:462px;font-size:10.3px;color:#2f2f2f;transform:scaleX(0.923);">DRU-04-73-21-01</div>
<div class="t" style="left:1130.5px;top:462px;font-size:10.3px;color:#2f2f2f;transform:scaleX(0.869);">REMOVAL/INSTALL...</div>
<div class="a" style="left:177px;top:477px;width:1051px;height:22px;background:#f7c6c5;border-bottom:1px solid #e0c4c4;"></div>
<div class="t" style="left:182.6px;top:484px;font-size:10.3px;color:#2f2f2f;transform:scaleX(0.893);">RA-00005</div>
<div class="t" style="left:292.4px;top:484px;font-size:10.3px;color:#2f2f2f;transform:scaleX(0.838);">BAG - PLASTIC</div>
<div class="t" style="left:581.8px;top:484px;font-size:10.3px;color:#2f2f2f;transform:scaleX(0.876);">G00624</div>
<div class="t" style="left:1020.8px;top:484px;font-size:10.3px;color:#2f2f2f;transform:scaleX(0.923);">DRU-04-73-21-01</div>
<div class="t" style="left:1130.5px;top:484px;font-size:10.3px;color:#2f2f2f;transform:scaleX(0.869);">REMOVAL/INSTALL...</div>
<div class="a" style="left:177px;top:499px;width:1051px;height:22px;background:#f7c6c5;border-bottom:1px solid #e0c4c4;"></div>
<div class="t" style="left:182.6px;top:506px;font-size:10.3px;color:#2f2f2f;transform:scaleX(0.893);">RA-00005</div>
<div class="t" style="left:292.4px;top:506px;font-size:10.3px;color:#2f2f2f;transform:scaleX(0.860);">CONTAINER- FUEL RESISTANT 5 GALLON</div>
<div class="t" style="left:581.8px;top:506px;font-size:10.3px;color:#2f2f2f;transform:scaleX(0.873);">STD-1054</div>
<div class="t" style="left:1020.8px;top:506px;font-size:10.3px;color:#2f2f2f;transform:scaleX(0.923);">DRU-04-73-21-01</div>
<div class="t" style="left:1130.5px;top:506px;font-size:10.3px;color:#2f2f2f;transform:scaleX(0.869);">REMOVAL/INSTALL...</div>
<div class="a" style="left:287px;top:425.3px;width:1px;height:30px;background:#8f8f94;"></div>
<div class="a" style="left:287px;top:455px;width:1px;height:66px;background:#dcc8c8;"></div>
<div class="a" style="left:577px;top:425.3px;width:1px;height:30px;background:#8f8f94;"></div>
<div class="a" style="left:577px;top:455px;width:1px;height:66px;background:#dcc8c8;"></div>
<div class="a" style="left:686px;top:425.3px;width:1px;height:30px;background:#8f8f94;"></div>
<div class="a" style="left:686px;top:455px;width:1px;height:66px;background:#dcc8c8;"></div>
<div class="a" style="left:796px;top:425.3px;width:1px;height:30px;background:#8f8f94;"></div>
<div class="a" style="left:796px;top:455px;width:1px;height:66px;background:#dcc8c8;"></div>
<div class="a" style="left:906px;top:425.3px;width:1px;height:30px;background:#8f8f94;"></div>
<div class="a" style="left:906px;top:455px;width:1px;height:66px;background:#dcc8c8;"></div>
<div class="a" style="left:1015px;top:425.3px;width:1px;height:30px;background:#8f8f94;"></div>
<div class="a" style="left:1015px;top:455px;width:1px;height:66px;background:#dcc8c8;"></div>
<div class="a" style="left:1125px;top:425.3px;width:1px;height:30px;background:#8f8f94;"></div>
<div class="a" style="left:1125px;top:455px;width:1px;height:66px;background:#dcc8c8;"></div>
<div class="t" style="left:193.7px;top:625px;font-size:11px;color:#2f2f2f;transform:scaleX(0.927);">Records: 3</div>
<div class="t" style="left:1139.8px;top:624px;font-size:11px;color:#2f2f2f;transform:scaleX(0.910);">Legend</div>
<svg style="left:1191.75px;top:619.35px" width="19.5" height="19.5" viewBox="0 0 20 20"><circle cx="10" cy="10" r="10" fill="#3a3c45"/><path d="M3.6 10 Q10 2.6 16.4 10 Q10 17.4 3.6 10Z" fill="#fff"/><circle cx="10" cy="10" r="2.6" fill="#3a3c45"/><circle cx="10" cy="10" r="0.9" fill="#c9c9cc"/></svg>
<svg style="left:400px;top:470px" width="140" height="160" viewBox="400 470 140 160"><path d="M413.2 481.1 L484.6 604 L517 578 Z" fill="#0a96fc"/><circle cx="507.8" cy="599.7" r="23.3" fill="#1c1c1c"/><circle cx="507.8" cy="599.7" r="22.2" fill="#fff"/><circle cx="507.8" cy="599.7" r="20.4" fill="#0a96fc"/><text x="508.7" y="608.7" text-anchor="middle" font-family="Liberation Sans, sans-serif" font-weight="bold" font-size="22.4" fill="#fff" transform="translate(508.7 0) scale(1.13 1) translate(-508.7 0)">5</text></svg>
<svg style="left:0;top:0;pointer-events:none" width="1399" height="750" viewBox="0 0 1399 750"><g opacity="1.0"><rect x="96.4" y="51.7" width="15" height="17.2" fill="#565861"/><rect x="98.20" y="53.02" width="1.80" height="0.91" fill="#fff" opacity="0.45"/><rect x="100.90" y="53.02" width="3.50" height="0.91" fill="#fff" opacity="0.45"/><rect x="105.30" y="53.02" width="4.30" height="0.91" fill="#fff" opacity="0.45"/><rect x="98.20" y="54.84" width="1.80" height="1.52" fill="#fff" opacity="0.95"/><rect x="100.90" y="54.84" width="3.50" height="1.52" fill="#fff" opacity="0.95"/><rect x="105.30" y="54.84" width="4.30" height="1.52" fill="#fff" opacity="0.95"/><rect x="98.20" y="57.16" width="1.80" height="1.42" fill="#fff" opacity="0.6"/><rect x="100.90" y="57.16" width="3.50" height="1.42" fill="#fff" opacity="0.6"/><rect x="105.30" y="57.16" width="4.30" height="1.42" fill="#fff" opacity="0.6"/><rect x="98.20" y="59.19" width="1.80" height="1.42" fill="#fff" opacity="0.55"/><rect x="100.90" y="59.19" width="3.50" height="1.42" fill="#fff" opacity="0.55"/><rect x="105.30" y="59.19" width="4.30" height="1.42" fill="#fff" opacity="0.55"/><path d="M105.3 63.3 l3.9 3.7 M109.2 63.3 l-3.9 3.7" stroke="#fff" stroke-width="1.5"/></g><g fill="none" stroke="#565861" stroke-width="2.6"><path d="M147.18 56.60 A7.6 7.6 0 0 0 133.00 60.10"/><path d="M134.02 64.20 A7.6 7.6 0 0 0 148.20 60.70"/></g><path d="M130.20 59.60 h5.6 l-2.8 3.5z M145.40 61.20 h5.6 l-2.8 -3.5z" fill="#565861"/><g fill="#c5c6ce"><rect x="166" y="55.2" width="22.8" height="3.4"/><rect x="167.3" y="59.2" width="19.9" height="9.8"/><path d="M172 55.4V52.4H182.8V55.4" fill="none" stroke="#c5c6ce" stroke-width="1.1"/></g><rect x="175.4" y="59.2" width="3.6" height="3.8" fill="#fff"/><rect x="176.5" y="60.3" width="1.4" height="1.5" fill="#c5c6ce"/><rect x="204.9" y="52" width="9.6" height="11.8" fill="#565861"/><rect x="209" y="59.8" width="12.6" height="9.3" fill="#565861" stroke="#fff" stroke-width=".8"/><rect x="209.4" y="60.2" width="11.8" height="1.2" fill="#8b8c93"/><path d="M215.8 52.8 Q220.9 52.8 220.9 57.8 M218.6 56 L220.9 58.6 L223.3 56" fill="none" stroke="#565861" stroke-width="1.3"/><rect x="244.9" y="51.8" width="14.3" height="4.9" fill="#565861"/><rect x="242.3" y="57.5" width="19.4" height="8.6" rx="2.2" fill="#565861"/><rect x="244.9" y="62.6" width="14.2" height="6.6" fill="#565861" stroke="#fff" stroke-width="1"/><path d="M246.8 65.1h8M246.8 67.2h10.4" stroke="#fff" stroke-width=".9" opacity=".8"/><circle cx="245.2" cy="59.9" r=".7" fill="#fff" opacity=".7"/><path d="M266 58.6H272.8L269.4 62.1Z" fill="#1f6bff"/><g transform="translate(293.2 51.8) scale(1.0)"><rect x="0" y="1.1" width="14.3" height="15.1" rx="1.3" fill="#565861"/><rect x="4.3" y="0" width="6" height="3" rx="1" fill="#565861"/><rect x="5.6" y="1.1" width="3.4" height="1" fill="#fff" opacity=".55"/><rect x="6.3" y="7.1" width="10" height="10.6" fill="#565861" stroke="#fff" stroke-width="1.1"/><path d="M8.6 10h5.4M8.6 12.3h5.4M8.6 14.6h5.4" stroke="#fff" stroke-width="1" opacity=".85"/></g><path d="M331.2 62.3 L339.6 53 L348.1 62.3" fill="none" stroke="#c5c6ce" stroke-width="2.1" stroke-linejoin="miter"/><path d="M333 69 V62.6 L339.6 55.6 L347 62.6 V69Z" fill="#c5c6ce"/><path d="M336.2 62.9h6.6m-1.6-1.3l1.6 1.3M343 65.6h-6.6m1.6 1.3l-1.6-1.3" stroke="#fff" stroke-width="1" fill="none"/><circle cx="379.9" cy="57.7" r="4.7" fill="#565861"/><rect x="378.6" y="51.3" width="2.6" height="3" fill="#565861" transform="rotate(0 379.9 57.7)"/><rect x="378.6" y="51.3" width="2.6" height="3" fill="#565861" transform="rotate(45 379.9 57.7)"/><rect x="378.6" y="51.3" width="2.6" height="3" fill="#565861" transform="rotate(90 379.9 57.7)"/><rect x="378.6" y="51.3" width="2.6" height="3" fill="#565861" transform="rotate(135 379.9 57.7)"/><rect x="378.6" y="51.3" width="2.6" height="3" fill="#565861" transform="rotate(180 379.9 57.7)"/><rect x="378.6" y="51.3" width="2.6" height="3" fill="#565861" transform="rotate(225 379.9 57.7)"/><rect x="378.6" y="51.3" width="2.6" height="3" fill="#565861" transform="rotate(270 379.9 57.7)"/><rect x="378.6" y="51.3" width="2.6" height="3" fill="#565861" transform="rotate(315 379.9 57.7)"/><circle cx="379.9" cy="57.7" r="2.5" fill="#fff"/><rect x="367.4" y="61.8" width="2.6" height="6.4" fill="#565861"/><path d="M370.7 62.3 C373.5 61.4 375.5 62.2 377.2 63.3 L380.6 63.4 C381.7 63.5 381.7 65 380.6 65.1 L377.4 65.2 L381 65.3 L384 63.6 C385.2 63.2 386 64.4 385 65.3 L380.4 68.3 C378.5 69.1 373.5 68.6 370.7 67.7Z" fill="#565861"/><rect x="519" y="51.8" width="11.9" height="6" fill="#565861"/><path d="M516 57.8Q516 56 517.8 56H523.2L525.6 58.4H531.8Q533.6 58.4 533.6 60.2V67.2Q533.6 69 531.8 69H517.8Q516 69 516 67.2Z" fill="#565861" stroke="#fff" stroke-width=".5"/><circle cx="531.6" cy="64.7" r="4.6" fill="#6fc076" stroke="#fff" stroke-width=".7"/><text x="531.7" y="67.4" text-anchor="middle" font-family="Liberation Sans, sans-serif" font-weight="bold" font-size="7.4" fill="#fff">1</text><g fill="#565861"><rect x="556.4" y="51.9" width="3.9" height="13" rx="1.9"/><path d="M554.6 68.4 C553.9 65.2 555.6 62.8 558.35 62.6 C561.1 62.8 562.8 65.2 562.1 68.4 L560.2 68.4 L560.2 65.9 L556.5 65.9 L556.5 68.4Z"/><rect x="568.6" y="56" width="3.9" height="9.8"/><path d="M566.8 51.8 C566.1 55 567.8 57.4 570.55 57.6 C573.3 57.4 575 55 574.3 51.8 L572.4 51.8 L572.4 54.4 L568.7 54.4 L568.7 51.8Z"/><circle cx="570.55" cy="66.5" r="2.9"/></g><circle cx="570.55" cy="66.8" r="1.1" fill="#fff"/><circle cx="558.35" cy="53.9" r=".8" fill="#fff" opacity=".75"/><path d="M561.4 59h5m-1.6-1.5l1.6 1.5M567 61.7h-5m1.6 1.5l-1.6-1.5" stroke="#8d8e95" stroke-width="1.15" fill="none"/><rect x="596.2" y="53.6" width="12.5" height="14.5" rx=".8" fill="#565861"/><rect x="599.4" y="52.2" width="6.1" height="2.8" rx="1.2" fill="#565861"/><path d="M600 64.9 L606.2 58.7" stroke="#fff" stroke-width="3.2"/><path d="M598.3 66.7 L599 64 L601 66Z" fill="#fff"/><path d="M600.3 65.6 L606.7 59.3" stroke="#565861" stroke-width=".45" opacity=".6"/><g transform="translate(187.9 112.3) scale(0.885)"><rect x="0" y="1.1" width="14.3" height="15.1" rx="1.3" fill="#fbfbfb"/><rect x="4.3" y="0" width="6" height="3" rx="1" fill="#fbfbfb"/><rect x="5.6" y="1.1" width="3.4" height="1" fill="#3a3c45" opacity=".55"/><rect x="6.3" y="7.1" width="10" height="10.6" fill="#fbfbfb" stroke="#3a3c45" stroke-width="1.1"/><path d="M8.6 10h5.4M8.6 12.3h5.4M8.6 14.6h5.4" stroke="#3a3c45" stroke-width="1" opacity=".85"/></g><g opacity="1.0"><rect x="321.8" y="145.8" width="15" height="16.8" fill="#565861"/><rect x="323.60" y="147.08" width="1.80" height="0.89" fill="#fff" opacity="0.45"/><rect x="326.30" y="147.08" width="3.50" height="0.89" fill="#fff" opacity="0.45"/><rect x="330.70" y="147.08" width="4.30" height="0.89" fill="#fff" opacity="0.45"/><rect x="323.60" y="148.86" width="1.80" height="1.48" fill="#fff" opacity="0.95"/><rect x="326.30" y="148.86" width="3.50" height="1.48" fill="#fff" opacity="0.95"/><rect x="330.70" y="148.86" width="4.30" height="1.48" fill="#fff" opacity="0.95"/><rect x="323.60" y="151.14" width="1.80" height="1.38" fill="#fff" opacity="0.6"/><rect x="326.30" y="151.14" width="3.50" height="1.38" fill="#fff" opacity="0.6"/><rect x="330.70" y="151.14" width="4.30" height="1.38" fill="#fff" opacity="0.6"/><rect x="323.60" y="153.11" width="1.80" height="1.38" fill="#fff" opacity="0.55"/><rect x="326.30" y="153.11" width="3.50" height="1.38" fill="#fff" opacity="0.55"/><rect x="330.70" y="153.11" width="4.30" height="1.38" fill="#fff" opacity="0.55"/><path d="M330.7 157.2 l3.9 3.7 M334.6 157.2 l-3.9 3.7" stroke="#fff" stroke-width="1.5"/></g><g fill="none" stroke="#c5c6ce" stroke-width="2.5"><path d="M372.40 150.75 A7.5 7.5 0 0 0 358.40 154.20"/><path d="M359.40 158.25 A7.5 7.5 0 0 0 373.40 154.80"/></g><path d="M355.60 153.70 h5.6 l-2.8 3.5z M370.60 155.30 h5.6 l-2.8 -3.5z" fill="#c5c6ce"/><g opacity="1.0"><rect x="401" y="400.7" width="16" height="17.6" fill="#565861"/><rect x="402.92" y="402.05" width="1.92" height="0.93" fill="#fff" opacity="0.45"/><rect x="405.80" y="402.05" width="3.73" height="0.93" fill="#fff" opacity="0.45"/><rect x="410.49" y="402.05" width="4.59" height="0.93" fill="#fff" opacity="0.45"/><rect x="402.92" y="403.91" width="1.92" height="1.55" fill="#fff" opacity="0.95"/><rect x="405.80" y="403.91" width="3.73" height="1.55" fill="#fff" opacity="0.95"/><rect x="410.49" y="403.91" width="4.59" height="1.55" fill="#fff" opacity="0.95"/><rect x="402.92" y="406.29" width="1.92" height="1.45" fill="#fff" opacity="0.6"/><rect x="405.80" y="406.29" width="3.73" height="1.45" fill="#fff" opacity="0.6"/><rect x="410.49" y="406.29" width="4.59" height="1.45" fill="#fff" opacity="0.6"/><rect x="402.92" y="408.36" width="1.92" height="1.45" fill="#fff" opacity="0.55"/><rect x="405.80" y="408.36" width="3.73" height="1.45" fill="#fff" opacity="0.55"/><rect x="410.49" y="408.36" width="4.59" height="1.45" fill="#fff" opacity="0.55"/><path d="M410.5 412.6 l4.2 3.8 M414.7 412.6 l-4.2 3.8" stroke="#fff" stroke-width="1.5"/></g><g opacity="1.0"><rect x="146.3" y="704.8" width="15.2" height="17.2" fill="#c9cad2"/><rect x="148.12" y="706.12" width="1.82" height="0.91" fill="#fff" opacity="0.45"/><rect x="150.86" y="706.12" width="3.55" height="0.91" fill="#fff" opacity="0.45"/><rect x="155.32" y="706.12" width="4.36" height="0.91" fill="#fff" opacity="0.45"/><rect x="148.12" y="707.94" width="1.82" height="1.52" fill="#fff" opacity="0.95"/><rect x="150.86" y="707.94" width="3.55" height="1.52" fill="#fff" opacity="0.95"/><rect x="155.32" y="707.94" width="4.36" height="1.52" fill="#fff" opacity="0.95"/><rect x="148.12" y="710.26" width="1.82" height="1.42" fill="#fff" opacity="0.6"/><rect x="150.86" y="710.26" width="3.55" height="1.42" fill="#fff" opacity="0.6"/><rect x="155.32" y="710.26" width="4.36" height="1.42" fill="#fff" opacity="0.6"/><rect x="148.12" y="712.29" width="1.82" height="1.42" fill="#fff" opacity="0.55"/><rect x="150.86" y="712.29" width="3.55" height="1.42" fill="#fff" opacity="0.55"/><rect x="155.32" y="712.29" width="4.36" height="1.42" fill="#fff" opacity="0.55"/><path d="M155.3 716.4 l4.0 3.7 M159.3 716.4 l-4.0 3.7" stroke="#fff" stroke-width="1.5"/></g></svg>
</div></body></html>
